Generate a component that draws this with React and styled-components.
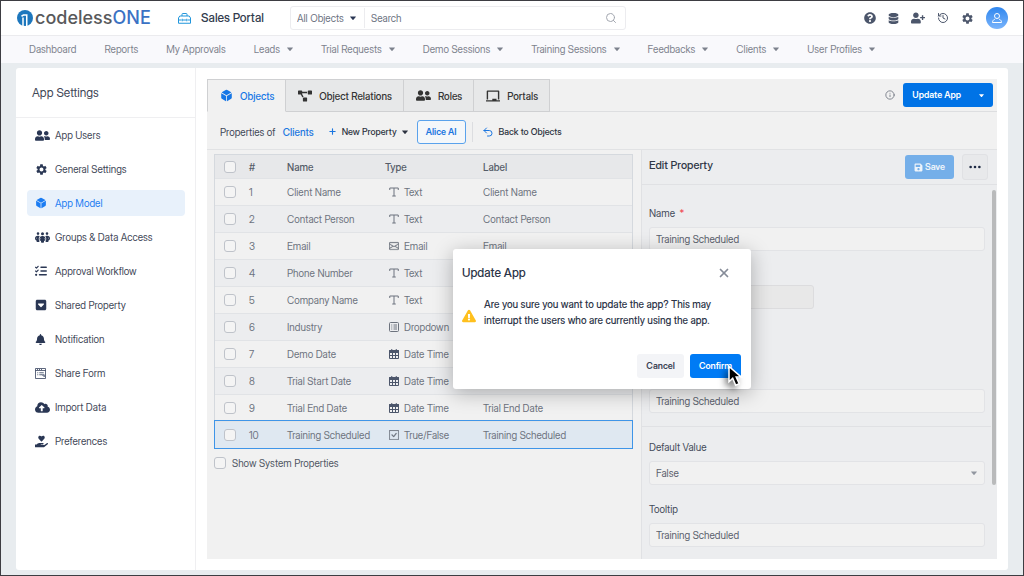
import { useState } from 'react'
import styled, { createGlobalStyle } from 'styled-components'
import {
  FaBell,
  FaChalkboard,
  FaCloudUploadAlt,
  FaDatabase,
  FaHandHoldingHeart,
  FaProjectDiagram,
  FaQuestionCircle,
  FaSave,
  FaUserFriends,
  FaUserPlus,
  FaExclamationTriangle
} from 'react-icons/fa'
import { FaListCheck, FaPeopleGroup, FaSquareCaretDown } from 'react-icons/fa6'
import { IoCube } from 'react-icons/io5'
import { MdSettings } from 'react-icons/md'
import { BsEnvelope, BsCheckSquare, BsThreeDots } from 'react-icons/bs'
import { History, Info, Plus, Search, Undo2, X } from 'lucide-react'

const GlobalStyle = createGlobalStyle`
  *, *::before, *::after {
    box-sizing: border-box;
  }

  body {
    margin: 0;
    color: #3f4757;
    font-family: 'Inter Display', Inter, 'Liberation Sans', sans-serif;
    font-size: 10px;
    line-height: 16px;
  }

  button, input, select {
    color: inherit;
    font: inherit;
    margin: 0;
  }

  h1, h2, p {
    margin: 0;
  }

  svg {
    display: block;
    flex-shrink: 0;
  }
`

const Page = styled.div`
  background: #e8ecef;
  border: 1px solid #3d3d42;
  display: flex;
  flex-flow: column nowrap;
  min-height: 100vh;
`

const Header = styled.header`
  align-items: center;
  background: #fff;
  border-bottom: 1px solid #ebebee;
  display: flex;
  height: 35px;
  padding: 0 15px 0 16px;
`

const Logo = styled.a`
  align-items: center;
  color: #58595b;
  display: flex;
  font-family: Inter, 'Liberation Sans', sans-serif;
  font-size: 18px;
  font-weight: 500;
  gap: 2px;
  line-height: 24px;
  text-decoration: none;
  width: 161px;

  b {
    color: #3b72c4;
    font-weight: 500;
  }
`

const PortalName = styled.div`
  align-items: center;
  color: #333c4e;
  display: flex;
  font-size: 12px;
  font-weight: 500;
  gap: 10px;
  width: 112px;
`

const SearchBox = styled.form`
  border: 1px solid #ececef;
  border-radius: 3px;
  color: #6c727f;
  display: flex;
  flex: 0 1 336px;
  height: 24px;
`

const SelectWrap = styled.div`
  align-items: center;
  display: flex;
  position: relative;

  svg {
    pointer-events: none;
    position: absolute;
    right: ${({ $inset }) => $inset};
  }
`

const ScopeSelect = styled.select`
  appearance: none;
  background: transparent;
  border: 0;
  border-right: 1px solid #ececef;
  height: 20px;
  outline: 0;
  padding: 0 6px;
  width: 74px;
`

const SearchInput = styled.input`
  background: transparent;
  border: 0;
  flex: 1;
  min-width: 0;
  outline: 0;
  padding: 0 6px;

  &::placeholder {
    color: #6c727f;
    opacity: 1;
  }
`

const IconButton = styled.button`
  align-items: center;
  background: transparent;
  border: 0;
  color: ${({ $color }) => $color ?? '#4c566b'};
  cursor: pointer;
  display: flex;
  justify-content: center;
  padding: 0;
`

const SearchButton = styled(IconButton)`
  color: #a3a7b0;
  width: 28px;
`

const HeaderActions = styled.div`
  align-items: center;
  display: flex;
  gap: 12px;
  margin-left: auto;
`

const Avatar = styled(IconButton)`
  background: linear-gradient(#2f86ee, #7ab4fb);
  border-radius: 50%;
  color: #fff;
  height: 22px;
  width: 22px;
`

const NavBar = styled.nav`
  align-items: center;
  background: #f9f9fc;
  display: flex;
  gap: 28px;
  height: 27px;
  padding: 0 28px 1px;
`

const NavLink = styled.a`
  align-items: center;
  color: #7d828d;
  display: flex;
  gap: 7px;
  text-decoration: none;
  white-space: nowrap;
`

const Panel = styled.main`
  background: #fff;
  border-radius: 3px;
  display: flex;
  flex: 1;
  margin: 5px 15px;
`

const Sidebar = styled.aside`
  border-right: 1px solid #efeff1;
  flex: 0 0 180px;
`

const SidebarTitle = styled.h1`
  border-bottom: 1px solid #efeff1;
  color: #3f4757;
  font-size: 12px;
  font-weight: 400;
  line-height: 17px;
  padding: 16px 16px;
`

const SideMenu = styled.div`
  display: flex;
  flex-flow: column nowrap;
  gap: 8px;
  padding: 4px 10px 4px 11px;
`

const SideLink = styled.a`
  align-items: center;
  background: ${({ $active }) => ($active ? '#e8f1fb' : 'transparent')};
  border-radius: 4px;
  color: ${({ $active }) => ($active ? '#1b7cf2' : '#3f4757')};
  display: flex;
  height: 26px;
  padding: 0 8px;
  text-decoration: none;

  svg {
    color: ${({ $active }) => ($active ? '#1b7cf2' : '#2a3754')};
  }
`

const SideIcon = styled.span`
  display: flex;
  width: 20px;
`

const Workspace = styled.section`
  background: #f1f1f1;
  display: flex;
  flex: 1;
  flex-flow: column nowrap;
  margin: 11px;
  min-width: 0;
  position: relative;
`

const TabBar = styled.div`
  align-items: center;
  border-bottom: 1px solid #dddee0;
  display: flex;
  height: 33px;
  padding-right: 4px;
`

const Tab = styled.button`
  align-items: center;
  align-self: stretch;
  background: ${({ $active }) => ($active ? '#f1f1f1' : '#e7e8e9')};
  border: 1px solid #cfd0d2;
  border-left-width: ${({ $active }) => ($active ? '1px' : '0')};
  border-bottom-color: ${({ $active }) => ($active ? '#f1f1f1' : '#cfd0d2')};
  color: ${({ $active }) => ($active ? '#1677e6' : '#333')};
  cursor: pointer;
  display: flex;
  font-weight: 500;
  gap: 7px;
  margin-bottom: -1px;
  padding: 0 11px 0 12px;
  white-space: nowrap;
`

const TabActions = styled.div`
  align-items: center;
  display: flex;
  gap: 8px;
  margin-left: auto;
`

const SplitButton = styled.div`
  background: #0073e6;
  border-radius: 3px;
  color: #fff;
  display: flex;
  height: 24px;

  button {
    align-items: center;
    background: transparent;
    border: 0;
    cursor: pointer;
    display: flex;
    font-size: 9px;
    font-weight: 600;
    padding: 0 9px;
  }
`

const Toolbar = styled.div`
  align-items: center;
  border-bottom: 1px solid #e1e2e4;
  display: flex;
  height: 38px;
  padding: 2px 13px 0;
  white-space: nowrap;
`

const ToolbarTitle = styled.h2`
  color: #3f4757;
  font-size: 10px;
  font-weight: 400;
  margin-right: 14px;

  a {
    color: #1b76e0;
    font-weight: 500;
    margin-left: 5px;
    text-decoration: none;
  }
`

const ToolButton = styled.button`
  align-items: center;
  background: transparent;
  border: 0;
  color: #2d3340;
  cursor: pointer;
  display: flex;
  font-size: 9px;
  font-weight: 500;
  gap: 5px;
  padding: 0;
`

const AliceButton = styled.button`
  background: #f4f7fa;
  border: 1px solid #5aa2ec;
  border-radius: 3px;
  color: #1b76e0;
  cursor: pointer;
  font-size: 9px;
  font-weight: 600;
  height: 24px;
  margin: 0 6px 0 9px;
  padding: 0 8px;
`

const Divider = styled.span`
  background: #dcdde0;
  height: 20px;
  margin-right: 9px;
  width: 1px;
`

const Columns = styled.div`
  display: flex;
  flex: 1;
`

const TablePane = styled.div`
  flex: 1;
  min-width: 0;
  padding: 4px 8px 8px 7px;
`

const PropertyTable = styled.table`
  border: 1px solid #d5d9de;
  border-bottom: 0;
  border-collapse: separate;
  border-spacing: 0;
  color: #6d737e;
  table-layout: fixed;
  width: 100%;

  th, td {
    font-weight: 400;
    padding: 0;
    text-align: left;
    white-space: nowrap;
  }

  th {
    background: #e7e8ea;
    color: #555c68;
    font-weight: 500;
    height: 23px;
  }
`

const Row = styled.tr`
  background: ${({ $striped }) => ($striped ? '#ecedef' : '#f1f1f1')};

  td {
    border-top: 1px solid #e1e3e6;
    height: 27px;
  }

  ${({ $selected }) =>
    $selected &&
    `
    background: #dfe8f1;
    outline: 1px solid #3f95e8;
  `}
`

const Col = styled.col`
  width: ${({ $width }) => $width};
`

const Checkbox = styled.input.attrs({ type: 'checkbox' })`
  appearance: none;
  background: #f4f4f4;
  border: 1px solid #bfc3ca;
  border-radius: 3px;
  display: block;
  height: 12px;
  margin: ${({ $inset }) => ($inset ? '0 0 0 9px' : '0')};
  width: 12px;
`

const TypeCell = styled.span`
  align-items: center;
  display: flex;
  gap: 5px;
  padding-left: 4px;
`

const SystemToggle = styled.label`
  align-items: center;
  color: #4f5663;
  display: flex;
  gap: 6px;
  margin-top: 7px;
`

const EditPane = styled.div`
  background: #ecedef;
  border-left: 1px solid #e0e1e4;
  display: flex;
  flex: 0 0 356px;
  flex-flow: column nowrap;
`

const EditHeader = styled.div`
  align-items: center;
  border-bottom: 1px solid #e0e1e4;
  display: flex;
  gap: 8px;
  height: 35px;
  padding: 0 9px 0 7px;

  h2 {
    color: #2f3746;
    flex: 1;
    font-size: 11px;
    font-weight: 500;
    padding-bottom: 4px;
  }
`

const SaveButton = styled.button`
  align-items: center;
  background: #75afe9;
  border: 0;
  border-radius: 3px;
  color: #eef4fa;
  display: flex;
  font-size: 9px;
  font-weight: 600;
  gap: 2px;
  height: 24px;
  padding: 0 9px;
`

const MoreButton = styled(IconButton)`
  background: #e8e9eb;
  border: 1px solid #e0e1e4;
  border-radius: 3px;
  height: 26px;
  width: 26px;
`

const EditBody = styled.div`
  display: flex;
  flex: 1;
`

const Form = styled.form`
  flex: 1;
`

const ScrollTrack = styled.div`
  padding: 5px 1px;
  width: 6px;
`

const ScrollThumb = styled.div`
  background: #b9babb;
  border-radius: 2px;
  height: 81%;
`

const Section = styled.div`
  border-bottom: ${({ $last }) => ($last ? '0' : '1px solid #e0e1e4')};
  display: flex;
  flex-flow: column nowrap;
  padding: ${({ $last }) => ($last ? '12px 6px 12px 7px' : '20px 6px 13px 7px')};
`

const Field = styled.div`
  display: flex;
  flex-flow: column nowrap;
  gap: 6px;
  margin-top: ${({ $space }) => $space ?? '0'};

  label {
    color: #434a59;
  }
`

const Required = styled.span`
  color: #f0434e;
  margin-left: 2px;
`

const TextInput = styled.input`
  background: ${({ disabled }) => (disabled ? '#e8e8e8' : '#f1f1f1')};
  border: 1px solid ${({ disabled }) => (disabled ? '#dcdcde' : '#e2e3e6')};
  border-radius: 3px;
  color: #5a606c;
  height: 24px;
  outline: 0;
  padding: 0 6px;
  width: ${({ $short }) => ($short ? '49%' : '100%')};
`

const FieldSelect = styled(TextInput).attrs({ as: 'select' })`
  appearance: none;
`

const Overlay = styled.div`
  align-items: center;
  display: flex;
  inset: 0;
  justify-content: center;
  position: absolute;
`

const Dialog = styled.div`
  background: #fff;
  border-radius: 3px;
  box-shadow: 0 4px 20px rgba(0, 0, 0, 0.28);
  color: #2c3448;
  width: 298px;
`

const DialogHeader = styled.div`
  align-items: center;
  display: flex;
  justify-content: space-between;
  padding: 16px 20px 15px 9px;

  h2 {
    font-size: 12px;
    font-weight: 500;
  }
`

const DialogBody = styled.div`
  align-items: center;
  display: flex;
  gap: 8px;
  padding: 0 9px;

  p {
    font-weight: 500;
  }

  svg {
    margin-top: 8px;
  }
`

const DialogFooter = styled.div`
  display: flex;
  gap: 6px;
  justify-content: flex-end;
  padding: 26px 10px 11px;
`

const DialogButton = styled.button`
  background: ${({ $primary }) => ($primary ? '#007bf5' : '#f3f4f7')};
  border: 0;
  border-radius: 3px;
  color: ${({ $primary }) => ($primary ? '#fff' : '#3b4354')};
  cursor: pointer;
  font-size: 9px;
  font-weight: 600;
  height: 24px;
  padding: 0 9px;
  position: relative;
`

const Pointer = styled.svg`
  filter: drop-shadow(-3px 4px 3px rgba(0, 0, 0, 0.5));
  position: absolute;
  right: -2px;
  top: 11px;
`

const Caret = ({ size = 6, color = 'currentColor' }) => (
  <svg width={size} height={size} viewBox='0 0 6 6' fill={color} aria-hidden='true'>
    <path d='M0.3 1.5h5.4q.4 0 .1.4L3.4 4.7q-.4.4-.8 0L.2 1.9q-.3-.4.1-.4z' />
  </svg>
)

const LogoMark = () => (
  <svg width='16' height='16' viewBox='0 0 32 32' aria-hidden='true'>
    <circle cx='16' cy='16' r='16' fill='#1d77bd' />
    <path
      d='M9 12.500L13 10H19.500V32'
      fill='none'
      stroke='#fff'
      strokeWidth='3'
    />
    <path d='M12 32V15' fill='none' stroke='#fff' strokeWidth='3' />
  </svg>
)

const ToolboxIcon = () => (
  <svg
    width='13'
    height='13'
    viewBox='0 0 26 26'
    fill='none'
    stroke='#2196dc'
    strokeWidth='2'
    aria-hidden='true'
  >
    <path d='M8 8V4.500Q8 3 9.500 3h7Q18 3 18 4.500V8' />
    <path d='M3.500 8h19L25 12v10.500H1V12zM1 16h6m3 0h6m3 0h6M8.500 13.500v5m9-5v5' />
  </svg>
)

const PersonIcon = () => (
  <svg
    width='12'
    height='12'
    viewBox='0 0 24 24'
    fill='none'
    stroke='currentColor'
    strokeWidth='2'
    aria-hidden='true'
  >
    <circle cx='12' cy='8' r='5' />
    <path d='M7.500 14.500C4.500 15.500 3 18 3 21h18c0-3-1.500-5.500-4.500-6.500' />
  </svg>
)

const ShareFormIcon = () => (
  <svg
    width='11'
    height='11'
    viewBox='0 0 22 22'
    fill='none'
    stroke='currentColor'
    strokeWidth='1.500'
    aria-hidden='true'
  >
    <path d='M1 1h20v20H1zM1 5h20M4 3h2m2 0h2m2 0h2M4.500 9.500h2m2 0h9m-13 4h2m2 0h6m0 0h4v4z' />
  </svg>
)

const TextTypeIcon = () => (
  <svg
    width='10'
    height='10'
    viewBox='0 0 20 20'
    fill='none'
    stroke='currentColor'
    strokeWidth='2'
    aria-hidden='true'
  >
    <path d='M1.500 6V2h17v4M10 2v16M6.500 18h7' />
  </svg>
)

const DropdownTypeIcon = () => (
  <svg
    width='10'
    height='10'
    viewBox='0 0 20 20'
    fill='none'
    stroke='currentColor'
    strokeWidth='2'
    aria-hidden='true'
  >
    <rect x='1' y='1' width='18' height='18' rx='2' />
    <path d='M4.500 6h2M9 6h7M4.500 10h2M9 10h7M4.500 14h2M9 14h7' />
  </svg>
)

const CalendarIcon = () => (
  <svg
    width='10'
    height='10'
    viewBox='0 0 20 20'
    fill='none'
    stroke='#4c566b'
    strokeWidth='2'
    aria-hidden='true'
  >
    <path d='M1 3h18v4H1z' fill='#4c566b' />
    <path d='M1 3h18v16H1zM5.500 0v4m9-4v4M1 13h18M7 7v12m6-12v12' />
  </svg>
)

const navItems = [
  { label: 'Dashboard' },
  { label: 'Reports' },
  { label: 'My Approvals' },
  { label: 'Leads', menu: true },
  { label: 'Trial Requests', menu: true },
  { label: 'Demo Sessions', menu: true },
  { label: 'Training Sessions', menu: true },
  { label: 'Feedbacks', menu: true },
  { label: 'Clients', menu: true },
  { label: 'User Profiles', menu: true }
]

const sideItems = [
  { label: 'App Users', icon: <FaUserFriends size={15} /> },
  { label: 'General Settings', icon: <MdSettings size={13} /> },
  { label: 'App Model', icon: <IoCube size={12} />, active: true },
  { label: 'Groups & Data Access', icon: <FaPeopleGroup size={15} /> },
  { label: 'Approval Workflow', icon: <FaListCheck size={12} /> },
  { label: 'Shared Property', icon: <FaSquareCaretDown size={12} /> },
  { label: 'Notification', icon: <FaBell size={11} /> },
  { label: 'Share Form', icon: <ShareFormIcon /> },
  { label: 'Import Data', icon: <FaCloudUploadAlt size={15} /> },
  { label: 'Preferences', icon: <FaHandHoldingHeart size={13} /> }
]

const tabs = [
  { label: 'Objects', icon: <IoCube size={13} />, active: true },
  { label: 'Object Relations', icon: <FaProjectDiagram size={14} /> },
  { label: 'Roles', icon: <FaUserFriends size={15} /> },
  { label: 'Portals', icon: <FaChalkboard size={14} /> }
]

const typeIcons = {
  Text: <TextTypeIcon />,
  Email: <BsEnvelope size={10} strokeWidth={0.5} />,
  Dropdown: <DropdownTypeIcon />,
  'Date Time': <CalendarIcon />,
  'True/False': <BsCheckSquare size={10} strokeWidth={0.5} />
}

const properties = [
  { name: 'Client Name', type: 'Text' },
  { name: 'Contact Person', type: 'Text' },
  { name: 'Email', type: 'Email' },
  { name: 'Phone Number', type: 'Text' },
  { name: 'Company Name', type: 'Text' },
  { name: 'Industry', type: 'Dropdown' },
  { name: 'Demo Date', type: 'Date Time' },
  { name: 'Trial Start Date', type: 'Date Time' },
  { name: 'Trial End Date', type: 'Date Time' },
  { name: 'Training Scheduled', type: 'True/False' }
]

const TopHeader = () => (
  <Header>
    <Logo href='#home'>
      <LogoMark />
      <span>
        codeless<b>ONE</b>
      </span>
    </Logo>
    <PortalName>
      <ToolboxIcon />
      Sales Portal
    </PortalName>
    <SearchBox>
      <SelectWrap $inset='9px'>
        <ScopeSelect aria-label='Search in'>
          <option>All Objects</option>
        </ScopeSelect>
        <Caret color='#2a3754' />
      </SelectWrap>
      <SearchInput type='text' placeholder='Search' aria-label='Search' />
      <SearchButton type='button' aria-label='Run search'>
        <Search size={12} />
      </SearchButton>
    </SearchBox>
    <HeaderActions>
      <IconButton aria-label='Help'>
        <FaQuestionCircle size={12} />
      </IconButton>
      <IconButton aria-label='Data'>
        <FaDatabase size={11} />
      </IconButton>
      <IconButton aria-label='Invite user'>
        <FaUserPlus size={14} />
      </IconButton>
      <IconButton aria-label='History'>
        <History size={12} />
      </IconButton>
      <IconButton aria-label='Settings'>
        <MdSettings size={13} />
      </IconButton>
      <Avatar aria-label='Account'>
        <PersonIcon />
      </Avatar>
    </HeaderActions>
  </Header>
)

const PropertiesPane = () => (
  <TablePane>
    <PropertyTable>
      <colgroup>
        <Col $width='34px' />
        <Col $width='38px' />
        <Col $width='98px' />
        <Col $width='98px' />
        <Col />
      </colgroup>
      <thead>
        <tr>
          <th>
            <Checkbox $inset aria-label='Select all' />
          </th>
          <th>#</th>
          <th>Name</th>
          <th>Type</th>
          <th>Label</th>
        </tr>
      </thead>
      <tbody>
        {properties.map(({ name, type }, index) => (
          <Row
            key={name}
            $striped={index % 2 === 1}
            $selected={name === 'Training Scheduled'}
          >
            <td>
              <Checkbox $inset aria-label={name} />
            </td>
            <td>{index + 1}</td>
            <td>{name}</td>
            <td>
              <TypeCell>
                {typeIcons[type]}
                {type}
              </TypeCell>
            </td>
            <td>{name}</td>
          </Row>
        ))}
      </tbody>
    </PropertyTable>
    <SystemToggle>
      <Checkbox />
      Show System Properties
    </SystemToggle>
  </TablePane>
)

const EditProperty = () => (
  <EditPane>
    <EditHeader>
      <h2>Edit Property</h2>
      <SaveButton type='button'>
        <FaSave size={9} />
        Save
      </SaveButton>
      <MoreButton aria-label='More' $color='#1f2a44'>
        <BsThreeDots size={14} />
      </MoreButton>
    </EditHeader>
    <EditBody>
      <Form>
        <Section>
          <Field>
            <label htmlFor='name'>
              Name <Required>*</Required>
            </label>
            <TextInput id='name' defaultValue='Training Scheduled' />
          </Field>
          <Field $space='34px'>
            <TextInput $short disabled aria-label='Type' />
          </Field>
          <Field $space='80px'>
            <TextInput aria-label='Label' defaultValue='Training Scheduled' />
          </Field>
        </Section>
        <Section $last>
          <Field>
            <label htmlFor='default'>Default Value</label>
            <SelectWrap $inset='8px'>
              <FieldSelect id='default'>
                <option>False</option>
              </FieldSelect>
              <Caret color='#9297a0' />
            </SelectWrap>
          </Field>
          <Field $space='16px'>
            <label htmlFor='tooltip'>Tooltip</label>
            <TextInput id='tooltip' defaultValue='Training Scheduled' />
          </Field>
        </Section>
      </Form>
      <ScrollTrack>
        <ScrollThumb />
      </ScrollTrack>
    </EditBody>
  </EditPane>
)

const UpdateDialog = ({ onClose }) => (
  <Overlay>
    <Dialog role='dialog' aria-labelledby='dialog-title'>
      <DialogHeader>
        <h2 id='dialog-title'>Update App</h2>
        <IconButton $color='#868c98' onClick={onClose} aria-label='Close'>
          <X size={14} strokeWidth={3} />
        </IconButton>
      </DialogHeader>
      <DialogBody>
        <FaExclamationTriangle size={14} color='#ffc01e' />
        <p>
          Are you sure you want to update the app? This may interrupt the users
          who are currently using the app.
        </p>
      </DialogBody>
      <DialogFooter>
        <DialogButton onClick={onClose}>Cancel</DialogButton>
        <DialogButton $primary onClick={onClose}>
          Confirm
          <Pointer width='16' height='22' viewBox='0 0 16 22' aria-hidden='true'>
            <path
              d='M2 1.500v15.200l3.700-3.400 3 6.900 3.500-1.500-3-6.800h4.900z'
              fill='#000'
              stroke='#fff'
              strokeWidth='1.500'
            />
          </Pointer>
        </DialogButton>
      </DialogFooter>
    </Dialog>
  </Overlay>
)

export default function App() {
  const [dialogOpen, setDialogOpen] = useState(true)

  return (
    <>
      <GlobalStyle />
      <Page>
        <TopHeader />
        <NavBar>
          {navItems.map(({ label, menu }) => (
            <NavLink key={label} href='#nav'>
              {label}
              {menu && <Caret />}
            </NavLink>
          ))}
        </NavBar>
        <Panel>
          <Sidebar>
            <SidebarTitle>App Settings</SidebarTitle>
            <SideMenu>
              {sideItems.map(({ label, icon, active }) => (
                <SideLink key={label} href='#settings' $active={active}>
                  <SideIcon>{icon}</SideIcon>
                  {label}
                </SideLink>
              ))}
            </SideMenu>
          </Sidebar>
          <Workspace>
            <TabBar>
              {tabs.map(({ label, icon, active }) => (
                <Tab key={label} $active={active}>
                  {icon}
                  {label}
                </Tab>
              ))}
              <TabActions>
                <IconButton $color='#6d737e' aria-label='About updates'>
                  <Info size={10} />
                </IconButton>
                <SplitButton>
                  <button onClick={() => setDialogOpen(true)}>Update App</button>
                  <button aria-label='Update options'>
                    <Caret size={5} />
                  </button>
                </SplitButton>
              </TabActions>
            </TabBar>
            <Toolbar>
              <ToolbarTitle>
                Properties of <a href='#clients'>Clients</a>
              </ToolbarTitle>
              <ToolButton>
                <Plus size={9} color='#1b76e0' strokeWidth={3} />
                New Property
                <Caret />
              </ToolButton>
              <AliceButton>Alice AI</AliceButton>
              <Divider />
              <ToolButton>
                <Undo2 size={12} color='#1b76e0' />
                Back to Objects
              </ToolButton>
            </Toolbar>
            <Columns>
              <PropertiesPane />
              <EditProperty />
            </Columns>
            {dialogOpen && <UpdateDialog onClose={() => setDialogOpen(false)} />}
          </Workspace>
        </Panel>
      </Page>
    </>
  )
}
